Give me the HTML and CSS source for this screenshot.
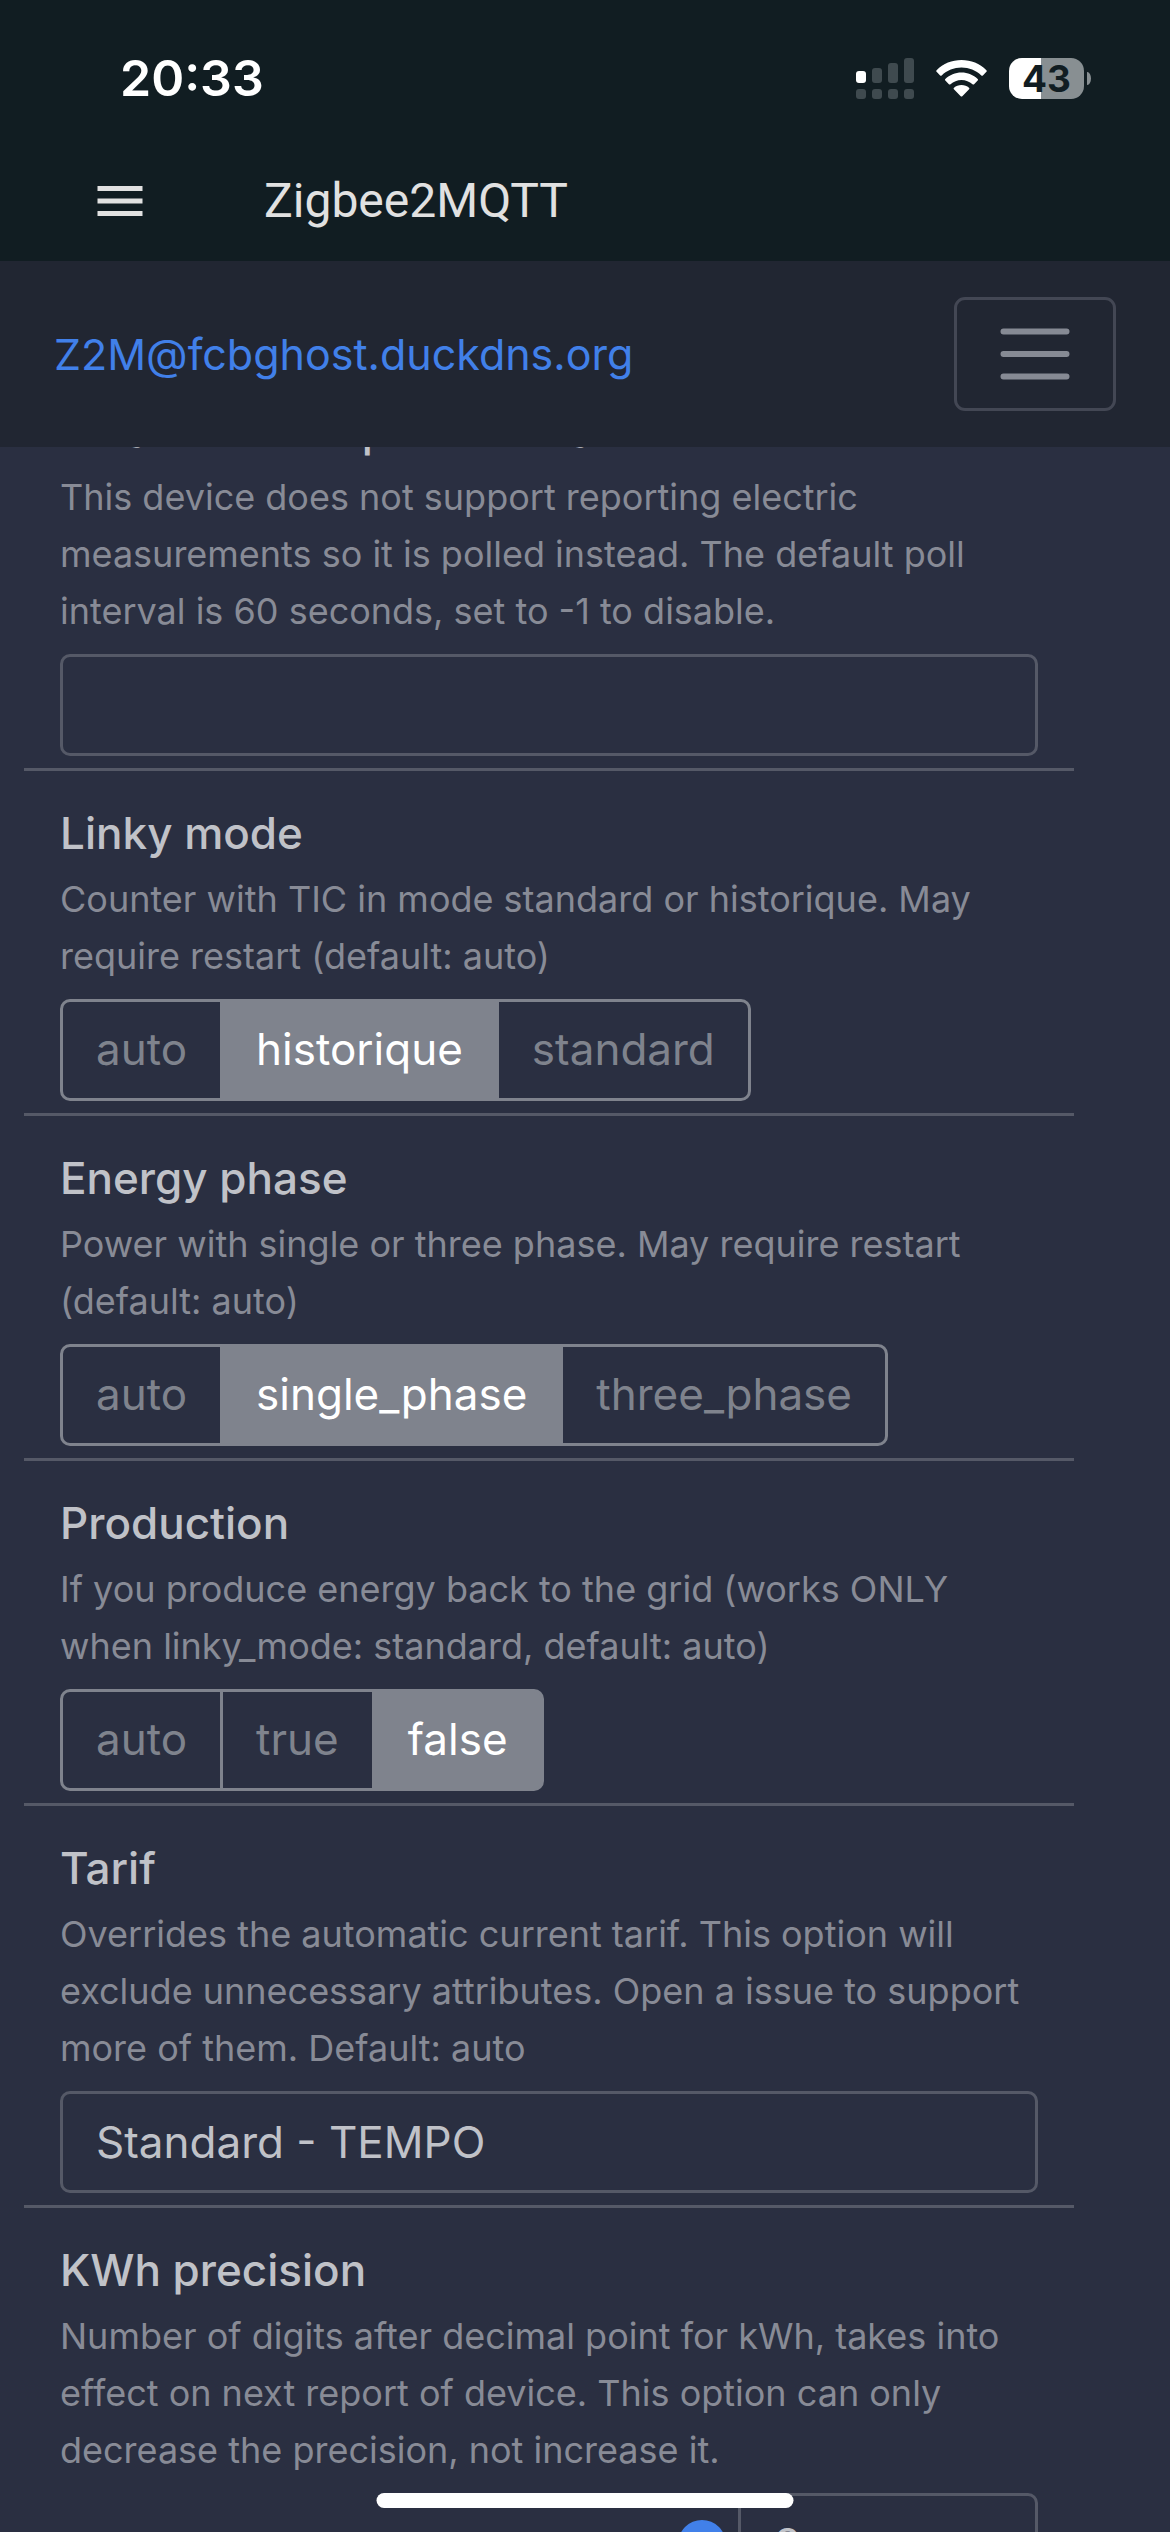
FILE: index.html
```html
<!DOCTYPE html>
<html lang="en">
<head>
  <meta charset="UTF-8">
  <meta name="viewport" content="width=device-width, initial-scale=1">
  <title>Zigbee2MQTT</title>
  <link rel="stylesheet" href="styles.css">
</head>
<body>
  <header class="top">
    <div class="status-bar">
      <span class="time">20:33</span>
      <div class="status-icons">
        <svg class="signal" width="58" height="41" viewBox="0 0 58 41" aria-hidden="true">
          <rect class="on" x="0" y="13" width="10" height="12" rx="3"/>
          <rect x="16" y="10" width="10" height="15" rx="3"/>
          <rect x="32" y="5" width="10" height="20" rx="3"/>
          <rect x="48" y="0" width="10" height="25" rx="3"/>
          <rect x="0" y="31" width="10" height="10" rx="3"/>
          <rect x="16" y="31" width="10" height="10" rx="3"/>
          <rect x="32" y="31" width="10" height="10" rx="3"/>
          <rect x="48" y="31" width="10" height="10" rx="3"/>
        </svg>
        <svg width="51" height="37" viewBox="0 0 51 37" fill="#fff" aria-hidden="true">
          <path d="M25.500 0C35 0 43.800 3.600 50.400 10.200Q51.200 11 50.400 11.800L46.900 15.400Q46.100 16.100 45.300 15.400C40 10.300 33 7.500 25.500 7.500S11 10.300 5.700 15.400Q4.900 16.100 4.100 15.400L.6 11.800Q-.2 11 .6 10.200C7.200 3.600 16 0 25.500 0Z"/>
          <path d="M25.500 12.500C31.700 12.500 37.400 14.900 41.700 19Q42.500 19.800 41.700 20.600L38.100 24.200Q37.300 24.900 36.500 24.200C33.500 21.500 29.700 19.900 25.500 19.900S17.500 21.500 14.500 24.200Q13.700 24.900 12.900 24.200L9.300 20.600Q8.500 19.800 9.300 19C13.600 14.900 19.300 12.500 25.500 12.500Z"/>
          <path d="M25.500 25C28.400 25 31 26 33 27.700Q33.900 28.500 33.100 29.300L26.300 36.200Q25.500 37 24.700 36.200L17.900 29.300Q17.100 28.500 18 27.700C20 26 22.600 25 25.500 25Z"/>
        </svg>
        <div class="battery"><span>43</span></div>
      </div>
    </div>
    <div class="app-bar">
      <button class="menu-btn" aria-label="Sidebar">
        <svg width="60" height="60" viewBox="0 0 24 24" fill="currentColor"><path d="M3,6H21V8H3V6M3,11H21V13H3V11M3,16H21V18H3V16Z"/></svg>
      </button>
      <span class="app-title">Zigbee2MQTT</span>
    </div>
    <nav class="navbar">
      <a class="brand" href="#">Z2M@fcbghost.duckdns.org</a>
      <button class="toggler" aria-label="Toggle navigation">
        <svg width="90" height="90" viewBox="0 0 30 30" fill="none" stroke="currentColor" stroke-width="2" stroke-linecap="round"><path d="M4.500 7.500h21M4.500 15h21M4.500 22.500h21"/></svg>
      </button>
    </nav>
  </header>

  <main class="options">
    <section class="option">
      <label class="name" for="poll">Measurement poll interval</label>
      <p class="desc">This device does not support reporting electric measurements so it is polled instead. The default poll interval is 60 seconds, set to -1 to disable.</p>
      <input class="field" id="poll" type="text">
    </section>

    <section class="option">
      <h2 class="name" id="linky">Linky mode</h2>
      <p class="desc">Counter with TIC in mode standard or historique. May require restart (default: auto)</p>
      <div class="btn-group" role="group" aria-labelledby="linky">
        <button>auto</button>
        <button class="active">historique</button>
        <button>standard</button>
      </div>
    </section>

    <section class="option">
      <h2 class="name" id="phase">Energy phase</h2>
      <p class="desc">Power with single or three phase. May require restart (default: auto)</p>
      <div class="btn-group" role="group" aria-labelledby="phase">
        <button>auto</button>
        <button class="active">single_phase</button>
        <button>three_phase</button>
      </div>
    </section>

    <section class="option">
      <h2 class="name" id="production">Production</h2>
      <p class="desc">If you produce energy back to the grid (works ONLY when linky_mode: standard, default: auto)</p>
      <div class="btn-group" role="group" aria-labelledby="production">
        <button>auto</button>
        <button>true</button>
        <button class="active">false</button>
      </div>
    </section>

    <section class="option">
      <label class="name" for="tarif">Tarif</label>
      <p class="desc">Overrides the automatic current tarif. This option will exclude unnecessary attributes. Open a issue to support more of them. Default: auto</p>
      <select class="field" id="tarif">
        <option>Standard - TEMPO</option>
      </select>
    </section>

    <section class="option">
      <label class="name" for="precision">KWh precision</label>
      <p class="desc">Number of digits after decimal point for kWh, takes into effect on next report of device. This option can only decrease the precision, not increase it.</p>
      <div class="range-row">
        <input class="range" type="range" min="0" max="3" value="3" aria-label="KWh precision">
        <input class="field number" id="precision" type="number" value="3">
      </div>
    </section>
  </main>

  <div class="home-indicator"></div>
</body>
</html>
```
FILE: styles.css
```css
:root {
  --bg: #2a2f41; --bar: #111d22; --nav: #212632;
  --text: #c0c2c8; --muted: #888b96;
  --line: #555967; --btn: #7f838d; --blue: #4180e9;
}
*, *::before, *::after { box-sizing: border-box; }
body {
  margin: 0; height: 100vh; overflow: hidden;
  font-family: Inter, "Liberation Sans", sans-serif; font-size: 44px; line-height: 68px;
  background: var(--bg); color: var(--text);
}
button, input, select { font: inherit; color: inherit; margin: 0; }
button { cursor: pointer; }

/* Header */
.top { position: relative; z-index: 1; background: var(--bar); }
.status-bar {
  display: flex; justify-content: space-between; align-items: center;
  height: 141px; padding: 48px 86px 33px 120px;
}
.time { font-size: 50px; font-weight: 600; color: #fff; }
.status-icons { display: flex; align-items: center; gap: 22px; }
.signal { fill: #3f4a4f; }
.signal .on { fill: #fff; }
.battery {
  position: relative; width: 75px; height: 41px; border-radius: 13px;
  background: linear-gradient(90deg, #fff 43%, #888f92 43%);
  color: var(--bar); font-size: 37px; font-weight: 700; line-height: 42px; text-align: center;
}
.battery::after {
  content: ""; position: absolute; left: 78px; top: 14px;
  width: 4px; height: 13px; border-radius: 0 4px 4px 0 / 0 7px 7px 0; background: #888f92;
}
.app-bar { display: flex; align-items: center; gap: 114px; height: 120px; padding: 0 90px; }
.menu-btn { padding: 0; border: 0; background: none; color: #e1e1e1; line-height: 0; }
.app-title { font-family: Roboto, sans-serif; font-size: 48px; color: #e1e1e1; }
.navbar {
  display: flex; justify-content: space-between; align-items: center;
  padding: 36px 54px; background: var(--nav);
}
.brand { font-size: 43px; color: var(--blue); text-decoration: none; }
.toggler {
  padding: 9px 33px; line-height: 0; background: none; color: #868a94;
  border: 3px solid #434754; border-radius: 11px;
}

/* Options list, scrolled under the header */
.options { margin: -78px 96px 0 24px; }
.option { padding: 28px 36px 12px; border-bottom: 3px solid var(--line); }
.name { display: block; margin: 0 0 4px; font-size: 44px; font-weight: 500; }
.desc { margin: 0 0 14px; font-size: 36px; line-height: 57px; color: var(--muted); }
.field {
  display: block; width: 100%; height: 102px; padding: 0 33px; appearance: none;
  background: transparent; border: 3px solid var(--line); border-radius: 10px;
}
.btn-group { display: flex; }
.btn-group button {
  height: 102px; padding: 0 33px 2px; margin-left: -3px;
  background: transparent; color: var(--btn); border: 3px solid var(--btn);
}
.btn-group button:first-child { margin-left: 0; border-radius: 10px 0 0 10px; }
.btn-group button:last-child { border-radius: 0 10px 10px 0; }
.btn-group .active { background: var(--btn); color: #fff; }
.range-row { display: flex; align-items: center; gap: 12px; }
.range { flex: 1; min-width: 0; height: 48px; appearance: none; background: none; }
.range::-webkit-slider-runnable-track { height: 24px; border-radius: 12px; background: #212632; }
.range::-webkit-slider-thumb {
  appearance: none; width: 48px; height: 48px; margin-top: -12px;
  border-radius: 50%; background: var(--blue);
}
.number { width: 300px; }

.home-indicator {
  position: fixed; left: 50%; bottom: 24px; z-index: 2; transform: translateX(-50%);
  width: 417px; height: 15px; border-radius: 8px; background: #fff;
}
```
